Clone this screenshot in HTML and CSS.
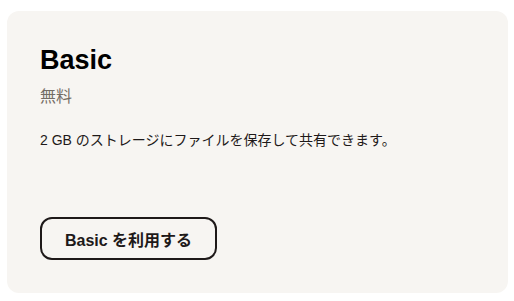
FILE: index.html
```html
<!DOCTYPE html>
<html lang="ja">
<head>
    <meta charset="UTF-8">
    <meta name="viewport" content="width=device-width, initial-scale=1.0">
    <title>Basic</title>
    <link rel="stylesheet" href="styles.css">
</head>
<body>
    <div class="page">
        <div class="plan-card">
            <h2 class="plan-name">Basic</h2>
            <p class="plan-price">無料</p>
            <p class="plan-desc">2 GB のストレージにファイルを保存して共有できます。</p>
            <button class="plan-button">Basic を利用する</button>
        </div>
    </div>
</body>
</html>
```

FILE: styles.css
```css
body {
    margin: 0;
    background-color: #fff;
    font-family: "Liberation Sans", Arial, "Noto Sans CJK JP", sans-serif;
    color: #1e1919;
}
.page {
    padding: 11px 6px 8px 7px;
}
.plan-card {
    box-sizing: border-box;
    height: 282px;
    background-color: #f7f5f2;
    border-radius: 12px;
    padding: 32px 33px 33px 33px;
    display: flex;
    flex-direction: column;
    align-items: flex-start;
}
.plan-name {
    margin: 0;
    font-size: 27px;
    line-height: 34px;
    font-weight: bold;
    color: #000;
}
.plan-price {
    margin: 8px 0 0 0;
    font-size: 16px;
    line-height: 24px;
    color: #736c64;
}
.plan-desc {
    margin: 21px 0 0 0;
    font-size: 14px;
    line-height: 20px;
}
.plan-button {
    margin-top: auto;
    width: 177px;
    height: 43px;
    border: 2px solid #1e1919;
    border-radius: 12px;
    background-color: transparent;
    font-family: inherit;
    font-size: 16px;
    font-weight: bold;
    color: #1e1919;
    cursor: pointer;
}
```
